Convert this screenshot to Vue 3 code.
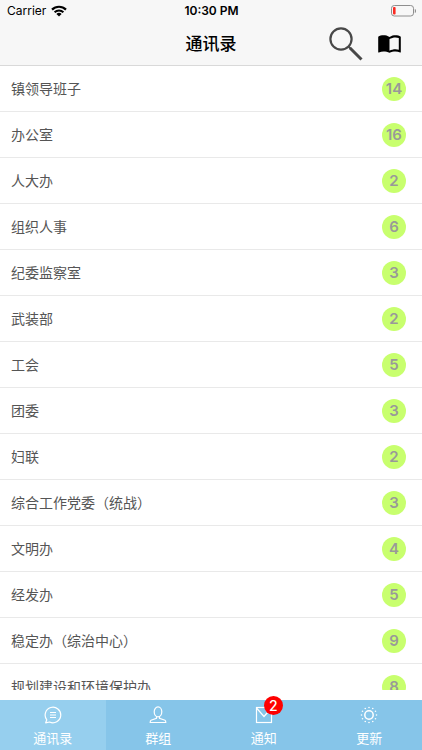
<script setup>
import { ref } from 'vue'

const groups = ref([
  { name: '镇领导班子', count: 14 },
  { name: '办公室', count: 16 },
  { name: '人大办', count: 2 },
  { name: '组织人事', count: 6 },
  { name: '纪委监察室', count: 3 },
  { name: '武装部', count: 2 },
  { name: '工会', count: 5 },
  { name: '团委', count: 3 },
  { name: '妇联', count: 2 },
  { name: '综合工作党委（统战）', count: 3 },
  { name: '文明办', count: 4 },
  { name: '经发办', count: 5 },
  { name: '稳定办（综治中心）', count: 9 },
  { name: '规划建设和环境保护办', count: 8 }
])

const tabs = [
  { key: 'contacts', label: '通讯录' },
  { key: 'groups', label: '群组' },
  { key: 'notice', label: '通知', badge: 2 },
  { key: 'update', label: '更新' }
]

const current = ref('contacts')

// 更新图标外圈的小圆点
const rays = Array.from({ length: 12 }, (_, i) => {
  const angle = (i * Math.PI) / 6
  return { x: 9 + 7.5 * Math.cos(angle), y: 9 + 7.5 * Math.sin(angle) }
})
</script>

<template>
  <div class="page">
    <header class="header">
      <div class="status">
        <div class="carrier">
          <span>Carrier</span>
          <svg width="16" height="12" viewBox="0 0 16 12">
            <path d="M1 4.6a10 10 0 0 1 14 0" fill="none" stroke="#000" stroke-width="2.2" />
            <path d="M3.6 7.3a6.3 6.3 0 0 1 8.800 0" fill="none" stroke="#000" stroke-width="2" />
            <path d="M8 11.6 5.4 9a3.8 3.8 0 0 1 5.2 0z" />
          </svg>
        </div>
        <div class="time">10:30 PM</div>
        <svg class="battery" width="25" height="12" viewBox="0 0 25 12">
          <rect x="0.5" y="0.5" width="22" height="10.5" rx="2.8" fill="none" stroke="#8e8e8e" />
          <rect x="2" y="2" width="2.6" height="7.5" rx="1" fill="#fb2a22" />
          <path d="M23.8 4v4c1-.4 1.2-1 1.2-2s-.2-1.6-1.2-2z" fill="#8e8e8e" />
        </svg>
      </div>
      <div class="navbar">
        <h1 class="title">通讯录</h1>
        <div class="actions">
          <button class="icon-btn" aria-label="搜索">
            <svg width="34" height="34" viewBox="0 0 34 34" fill="none" stroke="#484848">
              <circle cx="12" cy="12" r="10.6" stroke-width="2.2" />
              <path d="M19.5 19.5l2 2" stroke-width="2" />
              <path d="M21 21l11.5 11.5" stroke-width="3" />
            </svg>
          </button>
          <button class="icon-btn" aria-label="通讯簿">
            <svg width="23" height="18" viewBox="0.5 0 23 18">
              <path d="M12 2C10 .7 8 .3 6 .3S2.200.7.7 1.800V17c0 .4.3.6.7.5C3 16.700 4.500 16.400 6 16.400c2 0 4.300.4 6 1.400 1.700-1 4-1.400 6-1.400 1.600 0 3.200.3 4.600 1 .4.2.7-.1.7-.5V1.800C21.800.7 19.900.3 18 .3c-2 0-4 .4-6 1.700zm9.300 12.700c-1.100-.3-2.200-.5-3.300-.5-2 0-4.300.5-6 1.500V4c1.700-1 4-1.600 6-1.600 1.200 0 2.300.2 3.300.5z" />
            </svg>
          </button>
        </div>
      </div>
    </header>

    <main class="content">
      <ul class="list">
        <li v-for="item in groups" :key="item.name" class="row">
          <span class="name">{{ item.name }}</span>
          <span class="count">{{ item.count }}</span>
        </li>
      </ul>
    </main>

    <nav class="tabbar">
      <button
        v-for="tab in tabs"
        :key="tab.key"
        class="tab"
        :class="{ active: current === tab.key }"
        @click="current = tab.key"
      >
        <span class="tab-icon">
          <svg width="18" height="18" viewBox="0 0 18 18" fill="none" stroke="#fff">
            <template v-if="tab.key === 'contacts'">
              <path d="M2.800 13.800A7.800 7.800 0 1 1 5.500 16L1.700 16.800z" stroke-width="1.2" stroke-linejoin="round" />
              <path d="M6 6.500h6M6 9h6M6 11.500h6" />
            </template>
            <template v-else-if="tab.key === 'groups'">
              <g stroke-width="1.2">
                <ellipse cx="9" cy="5.800" rx="3.800" ry="5" />
                <path d="M7.500 10.500v1.800L2 14.300c-.6.3-.8.9-.8 2.200h15.600c0-1.300-.2-1.900-.8-2.200l-5.500-2v-1.800" />
              </g>
            </template>
            <template v-else-if="tab.key === 'notice'">
              <rect x="1.500" y="1.500" width="15" height="15" stroke-width="1.2" />
              <path d="M1.500 2L9 10.500 16.500 2" stroke-width="1.2" />
            </template>
            <template v-else>
              <circle cx="9" cy="9" r="4.200" stroke-width="1.5" />
              <circle v-for="(ray, i) in rays" :key="i" :cx="ray.x" :cy="ray.y" r="0.8" fill="#fff" stroke="none" />
            </template>
          </svg>
          <span v-if="tab.badge" class="badge">{{ tab.badge }}</span>
        </span>
        <span class="tab-label">{{ tab.label }}</span>
      </button>
    </nav>
  </div>
</template>

<style>
body {
  margin: 0;
}
</style>

<style scoped>
.page {
  display: flex;
  flex-direction: column;
  height: 100vh;
  background: #fff;
  font-family: Inter, "Noto Sans CJK SC", sans-serif;
}

.header {
  flex: none;
  background: #f7f7f7;
  border-bottom: 1px solid #d9d9d9;
}

.status {
  display: grid;
  grid-template-columns: 1fr auto 1fr;
  align-items: center;
  height: 22px;
  padding: 0 6px 0 7px;
  font-size: 12px;
  line-height: 22px;
}

.carrier {
  display: flex;
  align-items: center;
  gap: 5px;
}

.time {
  font-weight: 600;
}

.battery {
  justify-self: end;
}

.navbar {
  display: grid;
  grid-template-columns: 1fr auto 1fr;
  align-items: center;
  height: 43px;
  padding: 0 21px;
}

.title {
  grid-column: 2;
  margin: 0;
  font-size: 17px;
  font-weight: 500;
  line-height: 24px;
}

.actions {
  display: flex;
  align-items: center;
  justify-content: flex-end;
  gap: 15px;
}

.icon-btn {
  display: flex;
  padding: 0;
  border: 0;
  background: none;
}

.content {
  flex: 1;
  min-height: 0;
  margin-bottom: 10px;
  overflow: hidden;
}

.list {
  margin: 0;
  padding: 0;
  list-style: none;
}

.row {
  display: flex;
  align-items: center;
  justify-content: space-between;
  box-sizing: border-box;
  height: 46px;
  padding: 0 16px 0 11px;
  border-bottom: 1px solid #e9e9e9;
}

.name {
  color: #555;
  font-size: 14px;
  line-height: 24px;
}

.count {
  width: 24px;
  height: 24px;
  border-radius: 50%;
  background: #c8ff6e;
  color: #999;
  font-size: 15px;
  font-weight: 600;
  line-height: 24px;
  text-align: center;
}

.tabbar {
  display: flex;
  flex: none;
  height: 50px;
  background: #86c5e9;
}

.tab {
  display: flex;
  flex: 1;
  flex-direction: column;
  align-items: center;
  gap: 4px;
  padding: 6px 0 0;
  border: 0;
  background: none;
  color: #fff;
  font-family: inherit;
}

.tab.active {
  background: #96cfee;
}

.tab-icon {
  position: relative;
  display: flex;
}

.tab-label {
  font-size: 13px;
  line-height: 20px;
}

.badge {
  position: absolute;
  top: -10px;
  left: 9px;
  width: 19px;
  height: 19px;
  border-radius: 50%;
  background: #fe0000;
  font-size: 14px;
  font-weight: 500;
  line-height: 19px;
  text-align: center;
}
</style>
